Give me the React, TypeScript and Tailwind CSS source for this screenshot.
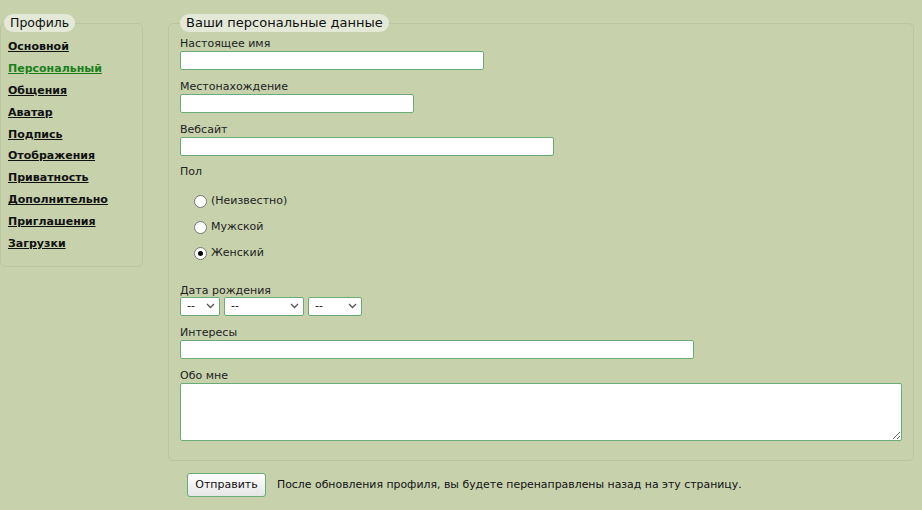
import React from "react";

const navItems = [
  "Основной",
  "Персональный",
  "Общения",
  "Аватар",
  "Подпись",
  "Отображения",
  "Приватность",
  "Дополнительно",
  "Приглашения",
  "Загрузки",
];

const Field: React.FC<{ label: string; width: string }> = ({ label, width }) => (
  <div className="mb-[10px]">
    <div className="h-[13px] leading-[13px] mb-[1px] text-[#222]">{label}</div>
    <input
      type="text"
      className={`${width} h-[19px] bg-white border border-[#6aab7a] rounded-[2px] outline-none px-1 block`}
    />
  </div>
);

const Radio: React.FC<{ label: string; checked?: boolean }> = ({ label, checked }) => (
  <div className="flex items-center h-[26px] pl-[14px]">
    <span className="w-[13px] h-[13px] rounded-full border border-[#767676] bg-white flex items-center justify-center">
      {checked && <span className="w-[5px] h-[5px] rounded-full bg-black" />}
    </span>
    <span className="ml-[4px] text-[#222]">{label}</span>
  </div>
);

const Select: React.FC<{ width: string }> = ({ width }) => (
  <div className={`relative ${width} h-[19px]`}>
    <select className="appearance-none w-full h-full bg-white border border-[#6aab7a] rounded-[2px] pl-[6px] text-[11px] outline-none">
      <option>--</option>
    </select>
    <svg
      className="absolute right-[5px] top-[6px] pointer-events-none"
      width="9"
      height="6"
      viewBox="0 0 9 6"
    >
      <path d="M1 1l3.5 3.5L8 1" fill="none" stroke="#555" strokeWidth="1.3" />
    </svg>
  </div>
);

export default function App() {
  return (
    <div
      className="w-[922px] h-[510px] bg-[#c7d2ad] text-[11px] text-[#111] overflow-hidden"
      style={{ fontFamily: '"DejaVu Sans", Verdana, sans-serif' }}
    >
      <div className="flex items-start pt-[14px]">
        {/* side menu */}
        <fieldset className="w-[143px] border border-[#b9c69f] rounded-[5px] pl-[7px] pt-[4px] pb-[11px]">
          <legend className="-ml-[4px] px-[6px] h-[18px] leading-[18px] rounded-full bg-[#e3e8d7] text-[12.5px] text-[#111]">
            Профиль
          </legend>
          {navItems.map((item) => (
            <div key={item} className="h-[21.9px] leading-[22px]">
              <a
                href="#"
                className={`font-bold underline ${
                  item === "Персональный" ? "text-[#1a801a]" : "text-[#111]"
                }`}
              >
                {item}
              </a>
            </div>
          ))}
        </fieldset>

        <div className="ml-[25px] w-[746px]">
          <fieldset className="border border-[#b9c69f] rounded-[5px] pl-[11px] pr-[11px] pt-[5px] pb-[19px]">
            <legend className="px-[6px] h-[18px] leading-[18px] rounded-full bg-[#e3e8d7] text-[13px] text-[#111]">
              Ваши персональные данные
            </legend>
            <Field label="Настоящее имя" width="w-[304px]" />
            <Field label="Местонахождение" width="w-[234px]" />
            <Field label="Вебсайт" width="w-[374px]" />
            <div className="h-[13px] leading-[13px] -mt-[1px] text-[#222]">Пол</div>
            <div className="pt-[10px] pb-[18px]">
              <Radio label="(Неизвестно)" />
              <Radio label="Мужской" />
              <Radio label="Женский" checked />
            </div>
            <div className="mb-[10px]">
              <div className="h-[13px] leading-[13px] text-[#222]">Дата рождения</div>
              <div className="flex gap-[4px]">
                <Select width="w-[40px]" />
                <Select width="w-[80px]" />
                <Select width="w-[54px]" />
              </div>
            </div>
            <Field label="Интересы" width="w-[514px]" />
            <div>
              <div className="h-[13px] leading-[13px] mb-[1px] text-[#222]">Обо мне</div>
              <textarea className="block w-[722px] h-[58px] bg-white border border-[#6aab7a] rounded-[2px] outline-none" />
            </div>
          </fieldset>

          <div className="flex items-center mt-[12px] ml-[19px]">
            <button className="w-[79px] h-[24px] rounded-[3px] border border-[#6aab7a] bg-gradient-to-b from-white to-[#e6e6e6] text-[11px] text-[#111]">
              Отправить
            </button>
            <span className="ml-[11px] text-[10.9px] text-[#111]">
              После обновления профиля, вы будете перенаправлены назад на эту страницу.
            </span>
          </div>
        </div>
      </div>
    </div>
  );
}
